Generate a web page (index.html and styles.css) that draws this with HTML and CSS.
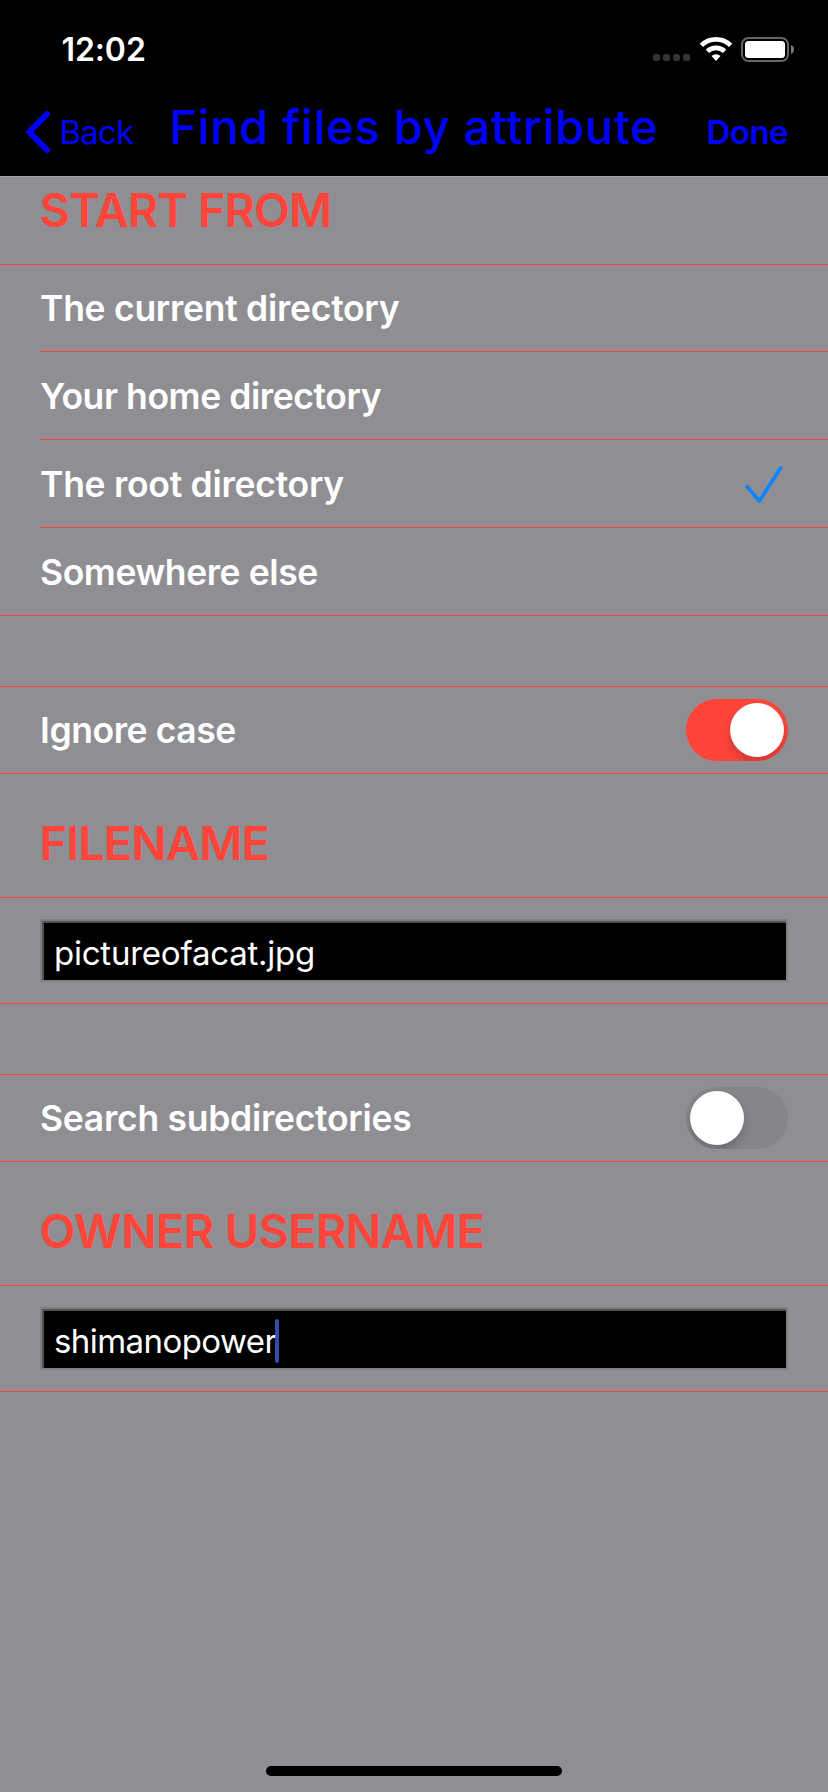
FILE: index.html
```html
<!DOCTYPE html>
<html lang="en">
<head>
<meta charset="utf-8">
<title>Find files by attribute</title>
<link rel="stylesheet" href="styles.css">
</head>
<body>
<div class="screen">
  <div class="status">
    <span class="time">12:02</span>
    <div class="indicators">
      <div class="signal"><i></i><i></i><i></i><i></i></div>
      <svg class="wifi" width="32" height="24" viewBox="0 0 32 24">
        <g fill="none" stroke="#fff" stroke-width="4.6">
          <path d="M1.4 8.4A20.7 20.7 0 0 1 30.6 8.4"/>
          <path d="M7.4 14.4A12.2 12.2 0 0 1 24.6 14.4"/>
        </g>
        <path d="M16 24L11.5 19A6.5 6.5 0 0 1 20.5 19Z" fill="#fff"/>
      </svg>
      <svg width="54" height="25" viewBox="0 0 54 25">
        <rect x="1" y="1" width="46" height="23" rx="6.5" fill="none" stroke="#666" stroke-width="2"/>
        <rect x="4" y="4" width="40" height="17" rx="3.5" fill="#fff"/>
        <path d="M50 8C54 9.500 54 15.500 50 17Z" fill="#7a7a7a"/>
      </svg>
    </div>
  </div>
  <header class="nav">
    <a class="back">
      <svg width="24" height="42" viewBox="0 0 24 42"><path d="M21 3L3.200 21L21 39" fill="none" stroke="#00f" stroke-width="5.800" stroke-linecap="round" stroke-linejoin="round"/></svg>
      <span class="back-label">Back</span>
    </a>
    <h1 class="title">Find files by attribute</h1>
    <a class="done">Done</a>
  </header>
  <main class="form">
    <h2 class="heading heading-first">START FROM</h2>
    <div class="group">
      <div class="row"><span class="label">The current directory</span></div>
      <div class="row"><span class="label tight">Your home directory</span></div>
      <div class="row"><span class="label">The root directory</span>
        <svg class="check" width="38" height="38" viewBox="0 0 38 38"><path d="M2 20.700L14.300 35L35.700 2" fill="none" stroke="#0a84ff" stroke-width="3.600" stroke-linecap="round" stroke-linejoin="round"/></svg>
      </div>
      <div class="row"><span class="label tight">Somewhere else</span></div>
    </div>
    <div class="group spaced">
      <div class="row"><span class="label tight">Ignore case</span><span class="switch on"><i class="knob"></i></span></div>
    </div>
    <h2 class="heading">FILENAME</h2>
    <div class="group">
      <div class="row field-row"><div class="field"><span class="value">pictureofacat.jpg</span></div></div>
    </div>
    <div class="group spaced">
      <div class="row"><span class="label">Search subdirectories</span><span class="switch"><i class="knob"></i></span></div>
    </div>
    <h2 class="heading owner">OWNER USERNAME</h2>
    <div class="group">
      <div class="row field-row"><div class="field"><span class="value user">shimanopower</span><i class="caret"></i></div></div>
    </div>
  </main>
  <div class="home"></div>
</div>
</body>
</html>
```
FILE: styles.css
```css
* { box-sizing: border-box; }
body {
  margin: 0;
  background: #8e8e93;
  font-family: Inter, "Liberation Sans", sans-serif;
}
.screen {
  display: flex;
  flex-direction: column;
  width: 828px;
  height: 1792px;
  overflow: hidden;
}
.status {
  display: flex;
  justify-content: space-between;
  height: 88px;
  padding: 29px 33px 0 61.5px;
  background: #000;
}
.time {
  color: #fff;
  font-size: 32px;
  font-weight: 600;
  line-height: 41px;
  letter-spacing: -0.1px;
}
.indicators {
  display: flex;
  height: 25px;
  margin-top: 8px;
}
.signal {
  display: flex;
  gap: 3px;
  margin: 17px 9.5px 0 0;
}
.signal i {
  width: 7px;
  height: 7px;
  border-radius: 2.5px;
  background: #353535;
}
.wifi { margin-right: 9.5px; }
.nav {
  display: flex;
  justify-content: space-between;
  height: 88px;
  padding: 0 40px 0 26px;
  background: #000;
  color: #00f;
}
.back {
  display: flex;
  gap: 9.5px;
  padding-top: 23px;
}
.back-label {
  font-size: 33px;
  line-height: 42px;
  letter-spacing: -0.8px;
}
.title {
  margin: 11px 12px 0 0;
  font-size: 46.8px;
  font-weight: 550;
  line-height: 56px;
  letter-spacing: 0.8px;
  white-space: nowrap;
}
.done {
  padding-top: 23px;
  font-size: 33px;
  font-weight: 600;
  line-height: 42px;
  letter-spacing: -0.54px;
}
.form {
  flex: 1;
  border-top: 1px solid #a3a3a7;
}
.heading {
  display: flex;
  align-items: flex-end;
  height: 123px;
  margin: 0;
  padding: 0 39px 26px 39.5px;
  color: #ff453a;
  font-size: 46.8px;
  font-weight: 600;
  line-height: 56px;
  letter-spacing: -0.86px;
}
.heading-first {
  height: 87px;
  letter-spacing: -1px;
}
.owner { letter-spacing: -0.65px; }
.group {
  border-top: 1px solid #ff453a;
  border-bottom: 1px solid #ff453a;
}
.spaced { margin-top: 70px; }
.row {
  display: flex;
  align-items: center;
  justify-content: space-between;
  height: 86px;
  margin-left: 40px;
  padding-right: 40px;
}
.row + .row {
  height: 88px;
  border-top: 1px solid #ff453a;
}
.label {
  padding-top: 2px;
  color: #fff;
  font-size: 35.5px;
  font-weight: 600;
  line-height: 44px;
  letter-spacing: -0.28px;
}
.tight { letter-spacing: -0.42px; }
.check { margin: 2px 5px 0 0; }
.switch {
  display: flex;
  width: 102px;
  height: 62px;
  padding: 4px;
  border-radius: 31px;
  background: #85868a;
  overflow: hidden;
}
.switch.on {
  justify-content: flex-end;
  background: #ff453a;
}
.knob {
  width: 54px;
  height: 54px;
  border-radius: 50%;
  background: #fff;
  box-shadow: 0 6px 10px rgba(20, 0, 20, 0.2);
}
.field-row { height: 105px; }
.field {
  display: flex;
  align-items: center;
  width: 748px;
  height: 63px;
  padding: 5px 12px 0;
  border: 2px solid #7f7f7f;
  background: #000;
  box-shadow: inset 2px 2px 0 #545454;
}
.value {
  color: #fff;
  font-size: 33px;
  line-height: 42px;
  letter-spacing: -0.23px;
}
.user { letter-spacing: -0.56px; }
.caret {
  width: 4px;
  height: 44px;
  margin: -1px 0 0 -1.5px;
  border-radius: 2px;
  background: rgba(54, 86, 190, 0.9);
}
.home {
  align-self: center;
  width: 296px;
  height: 10px;
  margin-bottom: 16px;
  border-radius: 5px;
  background: #000;
}
```
